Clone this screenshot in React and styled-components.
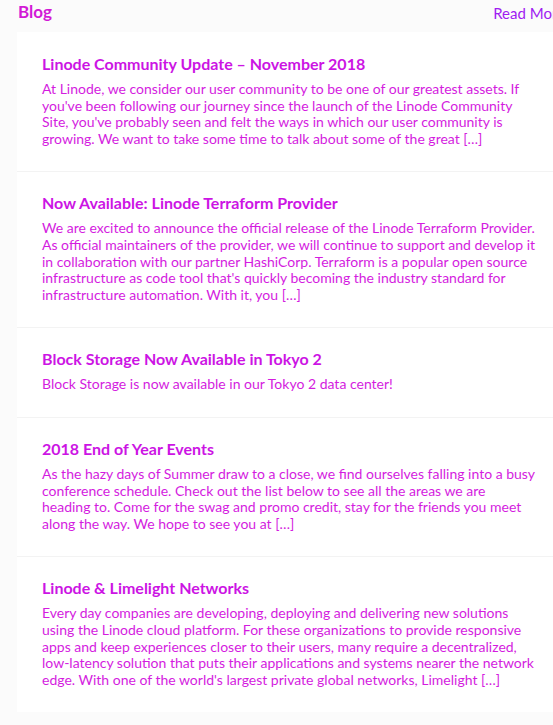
import React from 'react';
import styled, { createGlobalStyle } from 'styled-components';

const GlobalStyle = createGlobalStyle`
  html, body {
    margin: 0;
    padding: 0;
    background: #fbfbfb;
    overflow: hidden;
    font-family: Lato, "Noto Sans", sans-serif;
  }
`;

// Styled components
const Page = styled.div`
  width: 580px;
  padding-bottom: 26px;
`;

const Header = styled.div`
  display: flex;
  justify-content: space-between;
  align-items: center;
  height: 32px;
  padding: 0 15px 0 18px;
  box-sizing: border-box;
`;

const Heading = styled.h2`
  margin: 0 0 10px;
  font-size: 17px;
  font-weight: 700;
  color: #d21ad6;
`;

const ReadMore = styled.a`
  margin-bottom: 6px;
  font-size: 15px;
  color: #a01cf2;
  cursor: pointer;
`;

const Panel = styled.div`
  margin-left: 17px;
  background: #ffffff;
`;

const Post = styled.article`
  padding: 21px 24px 24px 25px;
  border-top: 1px solid ${(p) => (p.$first ? 'transparent' : '#f3f3f3')};
`;

const Title = styled.h3`
  margin: 0 0 7px;
  font-size: 16px;
  line-height: 20px;
  font-weight: 700;
  color: #cc14e4;
`;

const Excerpt = styled.p`
  margin: 0;
  max-width: 494.5px;
  font-size: 14px;
  line-height: 16.6px;
  color: #d41ce0;
`;

const posts = [
  {
    title: 'Linode Community Update – November 2018',
    text: "At Linode, we consider our user community to be one of our greatest assets. If you've been following our journey since the launch of the Linode Community Site, you've probably seen and felt the ways in which our user community is growing. We want to take some time to talk about some of the great […]",
  },
  {
    title: 'Now Available: Linode Terraform Provider',
    text: "We are excited to announce the official release of the Linode Terraform Provider. As official maintainers of the provider, we will continue to support and develop it in collaboration with our partner HashiCorp. Terraform is a popular open source infrastructure as code tool that's quickly becoming the industry standard for infrastructure automation. With it, you […]",
  },
  {
    title: 'Block Storage Now Available in Tokyo 2',
    text: 'Block Storage is now available in our Tokyo 2 data center!',
  },
  {
    title: '2018 End of Year Events',
    text: 'As the hazy days of Summer draw to a close, we find ourselves falling into a busy conference schedule. Check out the list below to see all the areas we are heading to. Come for the swag and promo credit, stay for the friends you meet along the way. We hope to see you at […]',
  },
  {
    title: 'Linode & Limelight Networks',
    text: "Every day companies are developing, deploying and delivering new solutions using the Linode cloud platform. For these organizations to provide responsive apps and keep experiences closer to their users, many require a decentralized, low-latency solution that puts their applications and systems nearer the network edge. With one of the world's largest private global networks, Limelight […]",
  },
];

const App = () => {
  return (
    <Page>
      <GlobalStyle />
      <Header>
        <Heading>Blog</Heading>
        <ReadMore>Read More</ReadMore>
      </Header>
      <Panel>
        {posts.map((post, i) => (
          <Post key={post.title} $first={i === 0}>
            <Title>{post.title}</Title>
            <Excerpt>{post.text}</Excerpt>
          </Post>
        ))}
      </Panel>
    </Page>
  );
};

export default App;
